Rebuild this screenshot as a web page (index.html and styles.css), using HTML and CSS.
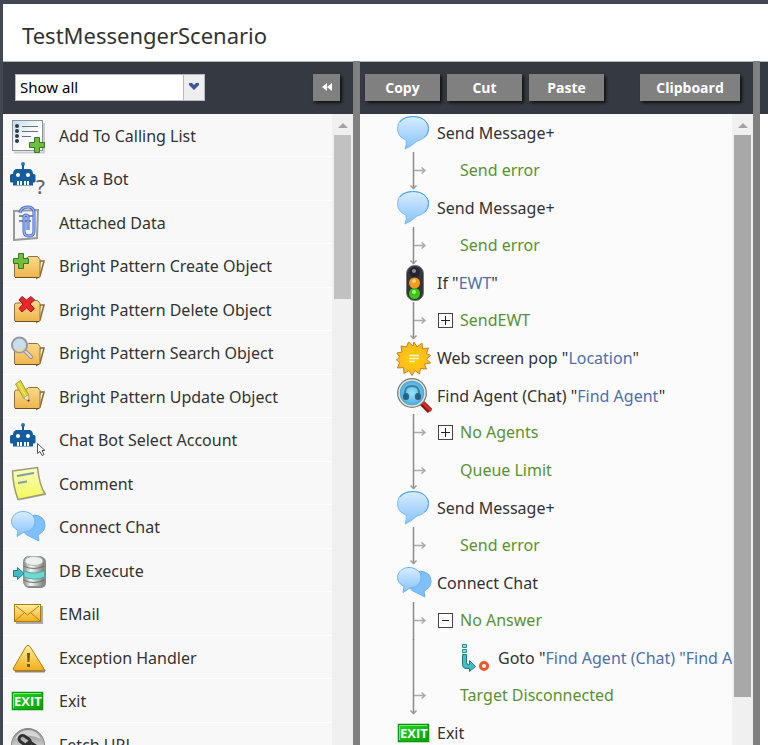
FILE: index.html
```html
<!DOCTYPE html>
<html lang="en">

<head>
    <meta charset="UTF-8">
    <meta name="viewport" content="width=device-width, initial-scale=1.0">
    <title>TestMessengerScenario</title>
    <link rel="stylesheet" href="styles.css">
</head>

<body>
    <!-- icon symbols -->
    <svg class="sprite" aria-hidden="true">
        <defs>
            <linearGradient id="g-blue" x1="0" y1="0" x2="0" y2="1">
                <stop offset="0" stop-color="#d8edff" />
                <stop offset="1" stop-color="#85c2fa" />
            </linearGradient>
            <linearGradient id="g-paper" x1="0" y1="0" x2="1" y2="1">
                <stop offset="0" stop-color="#c3ddf0" />
                <stop offset="0.6" stop-color="#ffffff" />
            </linearGradient>
            <linearGradient id="g-folder" x1="0" y1="0" x2="0" y2="1">
                <stop offset="0" stop-color="#fbd98b" />
                <stop offset="1" stop-color="#efb54b" />
            </linearGradient>
            <linearGradient id="g-note" x1="0" y1="0" x2="0" y2="1">
                <stop offset="0" stop-color="#fbfbc0" />
                <stop offset="1" stop-color="#f3f95a" />
            </linearGradient>
            <linearGradient id="g-steel" x1="0" y1="0" x2="1" y2="0">
                <stop offset="0" stop-color="#868b88" />
                <stop offset="0.35" stop-color="#f4f7f4" />
                <stop offset="1" stop-color="#777b78" />
            </linearGradient>
            <linearGradient id="g-gold" x1="0" y1="0" x2="0" y2="1">
                <stop offset="0" stop-color="#fff0a0" />
                <stop offset="1" stop-color="#f3ae18" />
            </linearGradient>
            <linearGradient id="g-green" x1="0" y1="0" x2="1" y2="1">
                <stop offset="0" stop-color="#22d822" />
                <stop offset="1" stop-color="#05a005" />
            </linearGradient>
            <linearGradient id="g-ball" x1="0" y1="0" x2="0" y2="1">
                <stop offset="0" stop-color="#858585" />
                <stop offset="0.6" stop-color="#d4d4d4" />
                <stop offset="1" stop-color="#808080" />
            </linearGradient>
            <radialGradient id="g-lens">
                <stop offset="0" stop-color="#9be4fb" />
                <stop offset="1" stop-color="#3fa6dc" />
            </radialGradient>
            <radialGradient id="g-sun">
                <stop offset="0" stop-color="#ffcf00" />
                <stop offset="1" stop-color="#fbb827" />
            </radialGradient>
        </defs>

        <symbol id="plus" viewBox="0 0 16 16">
            <path d="M5.500 0.500h5v5h5v5h-5v5h-5v-5h-5v-5h5z" fill="#6fbf3c" stroke="#2f7a2c" />
        </symbol>

        <symbol id="folder" viewBox="0 0 36 36">
            <path d="M30 13l4 0-4 15-3 2z" fill="#fff3d0" stroke="#8a6a34" stroke-width="1.500" />
            <path d="M4.500 13q0-2 2-2h9l3-2.500h9l2.500 3v16.500q0 1.500-1.500 1.500H6q-1.500 0-1.500-1.500z" fill="url(#g-folder)" stroke="#94713a" />
            <path d="M5 29.500h24" stroke="#6d5022" />
        </symbol>

        <symbol id="bot" viewBox="0 0 36 36">
            <circle cx="13" cy="3" r="2" fill="#2f74ad" />
            <path d="M12 4h2v4h-2zM6 8h14q3 1 3 5h1q1.500 0 1.500 1.500v6q0 1-1.500 1h-1v3H3v-3H1.500Q0 21.500 0 20.500v-6Q0 13 1.500 13H3q0-4 3-5z" fill="#155c9c" />
            <circle cx="8" cy="14" r="2" fill="#fff" />
            <circle cx="18" cy="14" r="2" fill="#fff" />
            <path d="M7 20h2v4H7zM10 20h2v4h-2zM14 20h2v4h-2zM17 20h2v4h-2z" fill="#fff" />
        </symbol>

        <symbol id="i-list" viewBox="0 0 36 36">
            <path d="M4 34.500h30V5" fill="none" stroke="#ccc" stroke-width="2" />
            <rect x="2.500" y="2.500" width="30" height="30" fill="url(#g-paper)" stroke="#8c9296" />
            <g fill="#343a40">
                <circle cx="7" cy="8" r="2" />
                <circle cx="7" cy="13" r="2" />
                <circle cx="7" cy="18" r="2" />
                <circle cx="7" cy="23" r="2" />
            </g>
            <path d="M12 8.500h16M12 13.500h16M12 18.500h9" stroke="#6b7074" />
            <use href="#plus" x="19" y="19" width="16" height="16" />
        </symbol>

        <symbol id="i-select" viewBox="0 0 36 36">
            <use href="#bot" width="36" height="36" />
            <path d="M27.500 21.500v10l2.500-2 2 4 2-1-2-4h3z" fill="#fff" stroke="#555" />
        </symbol>

        <symbol id="i-attach" viewBox="0 0 36 36">
            <path d="M4 6l24-1-1 28-23 2z" fill="#f5f5f7" stroke="#999" stroke-width="2" />
            <path d="M9 11h15M9 16h12" stroke="#8b8b95" stroke-width="2" />
            <path d="M10 8q1-6 8-6 6 0 6 6v18q0 5-5 5t-5-5V12q0-2 2-2t2 2v13" fill="none" stroke="#3f62c8" stroke-width="3" />
            <path d="M10 8q1-6 8-6 6 0 6 6v18q0 5-5 5t-5-5V12q0-2 2-2t2 2v13" fill="none" stroke="#8fb2f4" stroke-width="1.500" />
        </symbol>

        <symbol id="i-create" viewBox="0 0 36 36">
            <use href="#folder" width="36" height="36" />
            <use href="#plus" x="3" y="5" width="16" height="16" />
        </symbol>

        <symbol id="i-delete" viewBox="0 0 36 36">
            <use href="#folder" width="36" height="36" />
            <path d="M12 4.500l4.500 3.500L21 4.500 24.500 8 20 12l4.500 4.500L21 20l-4.500-4-4.500 4-3-3.500 4-4.500-4-4z" fill="#e8272b" stroke="#a81318" />
        </symbol>

        <symbol id="i-search" viewBox="0 0 36 36">
            <use href="#folder" width="36" height="36" />
            <path d="M15 16l6 6" stroke="#8d8d8d" stroke-width="4" stroke-linecap="round" />
            <path d="M15 16l6 6" stroke="#ddd" stroke-width="2" stroke-linecap="round" />
            <circle cx="9.500" cy="10" r="7.500" fill="#c5dff0" stroke="#959ba0" stroke-width="2" />
            <path d="M3 12q7 2 13 0-2 5-6.500 5T3 12z" fill="#e8d5a5" opacity="0.700" />
        </symbol>

        <symbol id="i-update" viewBox="0 0 36 36">
            <use href="#folder" width="36" height="36" />
            <path d="M5.500 5l5-3.500 8 14-5 3.500z" fill="#ddd334" stroke="#a9a129" />
            <path d="M8 3.500l8 14" stroke="#f3ee7b" />
            <path d="M13.500 19l5-3.500.500 7z" fill="#f5e5bd" stroke="#bba876" />
            <circle cx="18.500" cy="21.500" r="1" fill="#333" />
        </symbol>

        <symbol id="i-comment" viewBox="0 0 36 36">
            <path d="M7 35l29-6-1-4z" fill="#bbb" />
            <path d="M2.500 5l25-3.500q2 18 7.500 26.500L8 33.500Q3 20 2.500 5z" fill="url(#g-note)" stroke="#9a9a78" stroke-width="1.500" />
            <path d="M7 10l17-3M8 17l9-1.500" stroke="#79a2a2" stroke-width="2" />
        </symbol>

        <symbol id="i-chat" viewBox="0 0 36 36">
            <path d="M24 6q11.500 1 11 11Q34.500 23 28 26l1 6-10-5q-6-2-6-8z" fill="#7fc0fa" stroke="#69b0f2" />
            <path d="M13 2.500c7 0 12 4.500 12 10S20 23 14 23l-7 4.500 1-6Q1.500 18 1.500 12.500c0-5.500 5-10 11.500-10z" fill="url(#g-blue)" stroke="#6bb4f5" />
        </symbol>

        <symbol id="i-message" viewBox="0 0 36 36">
            <path d="M17 1.500c9 0 15.500 5 15.500 12S26 25 21 26q-5 5-12 8 2-5 1-9-8.500-3-8.500-11.500 0-12 15.500-12z" fill="url(#g-blue)" stroke="#7dbcf3" />
            <path d="M4 7q5-5.500 13-5.500c9 0 15.500 5 15.500 12q0 6-4 9" fill="none" stroke="#4ba6f7" />
        </symbol>

        <symbol id="i-db" viewBox="0 0 36 36">
            <rect x="14" y="4" width="22" height="31" rx="5" fill="#858985" />
            <rect x="13.500" y="3.500" width="21" height="30" rx="5" fill="url(#g-steel)" stroke="#8d928f" />
            <ellipse cx="24" cy="8" rx="9" ry="4.500" fill="#edf1ed" stroke="#b4bab5" />
            <path d="M13.500 13q10 5 21 0M13.500 27q10 5 21 0" fill="none" stroke="#6c716e" />
            <path d="M14 18q10 4 20.500 0v6q-10 4-20.500 0z" fill="#6fd9d0" stroke="#50a9a2" />
            <path d="M3.500 17.500h4v-3l6.500 6-6.500 6v-3h-4z" fill="#42bcc2" stroke="#287f87" />
        </symbol>

        <symbol id="i-email" viewBox="0 0 36 36">
            <path d="M6 27h26V10" fill="none" stroke="#aaa" stroke-width="2" />
            <rect x="4.500" y="8.500" width="26" height="17" fill="url(#g-gold)" stroke="#a97b17" />
            <path d="M5 25l9-8M30 25l-9-8M6 10l11.500 9L29 10" fill="none" stroke="#b57d15" />
        </symbol>

        <symbol id="i-warn" viewBox="0 0 36 36">
            <path d="M5 31.500h29l1-2" fill="none" stroke="#8e8570" stroke-width="2" />
            <path d="M16 6.500q2-2.500 4 0L33.500 28q1 2.500-1.500 2.500H5Q2.500 30.500 3.500 28z" fill="url(#g-gold)" stroke="#b47d10" />
            <path d="M17 13h3l-.500 9h-2zM17 24h3v3h-3z" fill="#70560e" />
        </symbol>

        <symbol id="i-exit" viewBox="0 0 36 36">
            <rect x="1" y="8" width="33" height="20" rx="2" fill="#b6e3b6" />
            <rect x="2.500" y="9.500" width="30" height="17" fill="url(#g-green)" stroke="#119311" />
            <path d="M3.500 25V10.500H31" fill="none" stroke="#71ec71" />
        </symbol>

        <symbol id="i-url" viewBox="0 0 36 36">
            <circle cx="18" cy="18" r="16.500" fill="url(#g-ball)" stroke="#888" />
            <path d="M5 12q13-7 26 0-4-9-13-9T5 12z" fill="#eee" opacity="0.700" />
            <g fill="none" stroke="#303030" stroke-width="3">
                <rect x="9" y="10" width="12" height="7" rx="3.500" transform="rotate(35 15 13)" />
                <rect x="16" y="17" width="12" height="7" rx="3.500" transform="rotate(35 22 20)" />
            </g>
        </symbol>

        <symbol id="i-if" viewBox="0 0 36 36">
            <rect x="10.500" y="0.500" width="17" height="35" rx="8" fill="#34343a" stroke="#77777c" />
            <circle cx="18.500" cy="7.500" r="5" fill="#232330" />
            <circle cx="18.500" cy="18" r="5.500" fill="#f49a1c" />
            <circle cx="18.500" cy="28.500" r="5.500" fill="#40c414" />
            <circle cx="18" cy="6" r="2" fill="#8b8b9c" />
            <circle cx="18" cy="16" r="2" fill="#fbd28b" />
            <circle cx="18" cy="27" r="2" fill="#a5f383" />
        </symbol>

        <symbol id="i-pop" viewBox="0 0 36 36">
            <path d="M18 2l3 5 5-4 .500 6 6-1-2 5.500 4 2-4 3.500 4 4-6 1 2 5-6-.500-1 5.500-4.500-3.500-3 5-3-5-5 3-.500-6-6 .500 2-5.500-3-2.500 3-3-2.500-4 5-1-1-6 5.500 1 2-5 4.500 4z" fill="url(#g-sun)" stroke="#c9821d" stroke-linejoin="round" />
            <path d="M13 15.500h10M13 18.500h10M13 21.500h6" stroke="#fff7d4" stroke-width="1.500" />
        </symbol>

        <symbol id="i-find" viewBox="0 0 36 36">
            <path d="M26 25l8 8" stroke="#85120f" stroke-width="6" />
            <path d="M27 25l8 8" stroke="#d92a21" stroke-width="3" />
            <circle cx="16" cy="15" r="13.500" fill="url(#g-lens)" stroke="#77807f" stroke-width="3" />
            <circle cx="16" cy="15" r="13" fill="none" stroke="#e1e5e0" stroke-width="1.500" />
            <path d="M9 17q-1-9 7-9t7 9" fill="none" stroke="#3d7fa5" stroke-width="2" />
            <rect x="7" y="15" width="6" height="7" rx="3" fill="#2b617f" />
            <rect x="19" y="15" width="6" height="7" rx="3" fill="#2b617f" />
        </symbol>

        <symbol id="i-goto" viewBox="0 0 36 36">
            <path d="M4.500 4.500h4v3h-4zM4.500 9.500h4v3h-4z" fill="#8fdfdf" stroke="#2b9095" />
            <path d="M4.500 14.500h4v8q0 2 2 2h1v-4l6 6-6 5v-3H9q-4.500 0-4.500-4z" fill="#46bdc2" stroke="#22777e" />
            <circle cx="26" cy="26" r="3.500" fill="#fff" stroke="#f0562a" stroke-width="3" />
        </symbol>

        <!-- connectors of the scenario tree -->
        <symbol id="c-branch" viewBox="0 0 36 38">
            <path d="M17.500 0v38" stroke="#8a8a8a" stroke-width="1.500" />
            <path d="M18 18.500h11M25.500 15.500l3.500 3-3.500 3" fill="none" stroke="#aaa" stroke-width="1.500" />
        </symbol>
        <symbol id="c-last" viewBox="0 0 36 38">
            <path d="M17.500 0v37" stroke="#8a8a8a" stroke-width="1.500" />
            <path d="M14.500 33.500l3 3 3-3" fill="none" stroke="#999" stroke-width="1.500" />
            <path d="M18 18.500h11M25.500 15.500l3.500 3-3.500 3" fill="none" stroke="#aaa" stroke-width="1.500" />
        </symbol>
        <symbol id="c-line" viewBox="0 0 36 38">
            <path d="M17.500 0v38" stroke="#8a8a8a" stroke-width="1.500" />
        </symbol>
    </svg>

    <div class="app">
        <header class="title-bar">
            <h1>TestMessengerScenario</h1>
        </header>

        <div class="workspace">
            <section class="panel palette">
                <div class="toolbar">
                    <div class="filter">
                        <select class="filter-select" aria-label="Filter blocks">
                            <option>Show all</option>
                        </select>
                        <span class="filter-arrow">
                            <svg width="12" height="8" viewBox="0 0 12 8"><path d="M1 0h3l2 2 2-2h3v2L6 7 1 2z" fill="#3b5998" /></svg>
                        </span>
                    </div>
                    <button type="button" class="btn btn-collapse" aria-label="Collapse panel">
                        <svg width="12" height="10" viewBox="0 0 12 10"><path d="M6 1v8L1 5zM11 1v8L6 5z" fill="#fff" /></svg>
                    </button>
                </div>
                <div class="panel-body">
                    <ul class="block-list">
                        <li><svg class="icon"><use href="#i-list" /></svg>Add To Calling List</li>
                        <li><svg class="icon"><use href="#bot" /><text x="26" y="33" class="question">?</text></svg>Ask a Bot</li>
                        <li><svg class="icon"><use href="#i-attach" /></svg>Attached Data</li>
                        <li><svg class="icon"><use href="#i-create" /></svg>Bright Pattern Create Object</li>
                        <li><svg class="icon"><use href="#i-delete" /></svg>Bright Pattern Delete Object</li>
                        <li><svg class="icon"><use href="#i-search" /></svg>Bright Pattern Search Object</li>
                        <li><svg class="icon"><use href="#i-update" /></svg>Bright Pattern Update Object</li>
                        <li><svg class="icon"><use href="#i-select" /></svg>Chat Bot Select Account</li>
                        <li><svg class="icon"><use href="#i-comment" /></svg>Comment</li>
                        <li><svg class="icon"><use href="#i-chat" /></svg>Connect Chat</li>
                        <li><svg class="icon"><use href="#i-db" /></svg>DB Execute</li>
                        <li><svg class="icon"><use href="#i-email" /></svg>EMail</li>
                        <li><svg class="icon"><use href="#i-warn" /></svg>Exception Handler</li>
                        <li><svg class="icon"><use href="#i-exit" /><text x="18" y="23" class="exit-text">EXIT</text></svg>Exit</li>
                        <li><svg class="icon"><use href="#i-url" /></svg>Fetch URL</li>
                    </ul>
                    <div class="scrollbar">
                        <span class="scroll-up"></span>
                        <span class="scroll-thumb thumb-short"></span>
                    </div>
                </div>
            </section>

            <div class="splitter"></div>

            <section class="panel scenario">
                <div class="toolbar toolbar-edit">
                    <button type="button" class="btn">Copy</button>
                    <button type="button" class="btn">Cut</button>
                    <button type="button" class="btn">Paste</button>
                    <button type="button" class="btn btn-clipboard">Clipboard</button>
                </div>
                <div class="panel-body">
                    <ul class="tree">
                        <li><svg class="icon"><use href="#i-message" /></svg><span>Send Message+</span></li>
                        <li class="branch"><svg class="connector"><use href="#c-last" /></svg><span class="label">Send error</span></li>
                        <li><svg class="icon"><use href="#i-message" /></svg><span>Send Message+</span></li>
                        <li class="branch"><svg class="connector"><use href="#c-last" /></svg><span class="label">Send error</span></li>
                        <li><svg class="icon"><use href="#i-if" /></svg><span>If "<em>EWT</em>"</span></li>
                        <li class="branch"><svg class="connector"><use href="#c-last" /></svg><button type="button" class="toggle" aria-label="Expand SendEWT"><svg width="9" height="9"><path d="M0 4.500h9M4.500 0v9" stroke="#222" /></svg></button><span class="label">SendEWT</span></li>
                        <li><svg class="icon"><use href="#i-pop" /></svg><span>Web screen pop "<em>Location</em>"</span></li>
                        <li><svg class="icon"><use href="#i-find" /></svg><span>Find Agent (Chat) "<em>Find Agent</em>"</span></li>
                        <li class="branch"><svg class="connector"><use href="#c-branch" /></svg><button type="button" class="toggle" aria-label="Expand No Agents"><svg width="9" height="9"><path d="M0 4.500h9M4.500 0v9" stroke="#222" /></svg></button><span class="label">No Agents</span></li>
                        <li class="branch"><svg class="connector"><use href="#c-last" /></svg><span class="label">Queue Limit</span></li>
                        <li><svg class="icon"><use href="#i-message" /></svg><span>Send Message+</span></li>
                        <li class="branch"><svg class="connector"><use href="#c-last" /></svg><span class="label">Send error</span></li>
                        <li><svg class="icon"><use href="#i-chat" /></svg><span>Connect Chat</span></li>
                        <li class="branch"><svg class="connector"><use href="#c-branch" /></svg><button type="button" class="toggle" aria-label="Collapse No Answer"><svg width="9" height="9"><path d="M1 4.500h7" stroke="#222" /></svg></button><span class="label">No Answer</span></li>
                        <li class="nested"><svg class="connector"><use href="#c-line" /></svg><svg class="icon"><use href="#i-goto" /></svg><span>Goto "<em>Find Agent (Chat) "Find Agent"</em>"</span></li>
                        <li class="branch"><svg class="connector"><use href="#c-last" /></svg><span class="label">Target Disconnected</span></li>
                        <li><svg class="icon"><use href="#i-exit" /><text x="18" y="23" class="exit-text">EXIT</text></svg><span>Exit</span></li>
                    </ul>
                    <div class="scrollbar">
                        <span class="scroll-up"></span>
                        <span class="scroll-thumb thumb-long"></span>
                    </div>
                </div>
            </section>

            <div class="splitter"></div>

            <section class="panel properties">
                <div class="toolbar"></div>
            </section>
        </div>
    </div>
</body>

</html>
```
FILE: styles.css
```css
* {
    box-sizing: border-box;
}

body {
    margin: 0;
    font-family: "Noto Sans", "Open Sans", sans-serif;
    font-size: 16px;
    color: #333;
    background: #414853;
}

ul {
    list-style: none;
    margin: 0;
    padding: 0;
}

.sprite {
    display: block;
    width: 0;
    height: 0;
}

.question {
    font-family: "Noto Sans", sans-serif;
    font-size: 20px;
    font-weight: 500;
    fill: #666;
}

.exit-text {
    font-family: "Open Sans", sans-serif;
    font-size: 13px;
    font-weight: bold;
    text-anchor: middle;
    fill: #fff;
}

.app {
    display: flex;
    flex-direction: column;
    height: 100vh;
    padding: 4px 0 0 3px;
    overflow: hidden;
}

.title-bar {
    flex: none;
    height: 57px;
    padding: 0 19px;
    display: flex;
    align-items: center;
    background: #fff;
}

h1 {
    margin: 0;
    padding-top: 5px;
    font-size: 22px;
    font-weight: normal;
}

.workspace {
    flex: 1;
    display: flex;
    min-height: 0;
}

.panel {
    display: flex;
    flex-direction: column;
    min-width: 0;
    background: #fff;
}

.palette {
    flex: none;
    width: 350px;
}

.scenario {
    flex: 1;
}

.properties {
    flex: none;
    width: 8px;
}

.splitter {
    flex: none;
    width: 7px;
    background: #808080;
}

.toolbar {
    flex: none;
    display: flex;
    align-items: center;
    justify-content: space-between;
    height: 53px;
    padding: 0 13px 2px 12px;
    border-top: 1px solid #b0bab5;
    background: #353941;
}

.toolbar-edit {
    justify-content: flex-start;
    padding-left: 5px;
}

.properties .toolbar {
    padding: 0;
}

.filter {
    position: relative;
    width: 190px;
    height: 27px;
}

.filter-select {
    width: 100%;
    height: 100%;
    padding: 0 26px 0 4px;
    border: 1px solid #b5b8c8;
    border-radius: 0;
    appearance: none;
    background: #fff;
    font-family: inherit;
    font-size: 15px;
    color: #000;
}

/* arrow box lies over the select */
.filter-arrow {
    position: absolute;
    top: 1px;
    right: 1px;
    bottom: 1px;
    width: 21px;
    display: flex;
    align-items: center;
    justify-content: center;
    border-left: 1px solid #b5b8c8;
    background: #eee;
    pointer-events: none;
}

.btn {
    width: 75px;
    height: 27px;
    margin-right: 7px;
    padding: 0;
    border: none;
    background: #808080;
    box-shadow: 2px 2px 3px #111;
    font-family: "Open Sans", sans-serif;
    font-size: 14px;
    font-weight: bold;
    color: #fff;
    cursor: pointer;
}

.btn:hover {
    background: #909090;
}

.btn-collapse {
    display: flex;
    align-items: center;
    justify-content: center;
    width: 27px;
    margin: 0;
}

.btn-clipboard {
    width: 100px;
    margin-left: auto;
    margin-right: 0;
}

.panel-body {
    flex: 1;
    display: flex;
    min-height: 0;
    overflow: hidden;
}

.block-list {
    flex: 1;
    background: #f8f8f8;
}

.block-list li {
    display: flex;
    align-items: center;
    gap: 13px;
    height: 43px;
    padding: 2px 0 0 7px;
    border-bottom: 1px solid #fff;
}

.block-list li:nth-child(even) {
    height: 44px;
    padding-top: 0;
}

.icon {
    flex: none;
    width: 36px;
    height: 36px;
}

.scrollbar {
    flex: none;
    display: flex;
    flex-direction: column;
    align-items: center;
    width: 21px;
    background: #f0f0f0;
}

.scroll-up {
    width: 0;
    margin: 9px 0 7px;
    border: 5px solid transparent;
    border-top: none;
    border-bottom-color: #a3a3a3;
}

.scroll-thumb {
    width: 17px;
}

.thumb-short {
    height: 26%;
    background: #c1c1c1;
}

.thumb-long {
    height: 89%;
    background: #a8a8a8;
}

.tree {
    flex: 1;
    min-width: 0;
    padding-left: 36px;
    overflow: hidden;
    background: #fbfbfb;
    white-space: nowrap;
}

.tree li {
    display: grid;
    grid-template-columns: 36px 1fr;
    column-gap: 5px;
    align-items: center;
    height: 38px;
}

.tree li:nth-child(even) {
    height: 37px;
}

.tree .branch {
    grid-template-columns: 36px 18px 1fr;
}

.tree .nested {
    grid-template-columns: 36px 26px 36px 1fr;
    column-gap: 0;
}

.nested .icon {
    grid-column: 3;
}

.nested span {
    padding-left: 4px;
}

.tree em {
    font-style: normal;
    color: #4f70ac;
}

.connector {
    width: 36px;
    height: 38px;
}

.label {
    grid-column: 3;
    padding-bottom: 2px;
    color: #5a9232;
}

.toggle {
    display: flex;
    align-items: center;
    justify-content: center;
    width: 15px;
    height: 15px;
    margin: 0 0 2px 1px;
    padding: 0;
    border: 1px solid #444;
    background: #fff;
    cursor: pointer;
}
```
